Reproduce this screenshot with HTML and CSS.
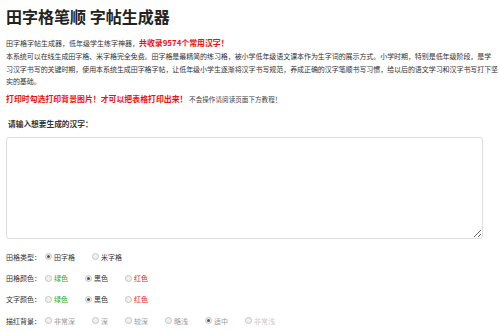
FILE: index.html
```html
<!DOCTYPE html>
<html lang="zh-CN">
<head>
    <meta charset="UTF-8">
    <meta name="viewport" content="width=device-width, initial-scale=1.0">
    <title>田字格笔顺 字帖生成器</title>
    <link rel="stylesheet" href="styles.css">
</head>
<body>
  <!-- 标题 -->
  <h1 class="titulo">田字格笔顺 字帖生成器</h1>

  <div class="intro">
    <p>田字格字帖生成器，低年级学生练字神器，<span class="rojo">共收录9574个常用汉字！</span></p>
    <p class="bloque">本系统可以在线生成田字格、米字格完全免费。田字格是最精简的练习格，被小学低年级语文课本作为生字词的展示方式。小学时期，特别是低年级阶段，是学<br>习汉字书写的关键时期，使用本系统生成田字格字帖，让低年级小学生逐渐将汉字书写规范，养成正确的汉字笔顺书写习惯，给以后的语文学习和汉字书写打下坚<br>实的基础。</p>
    <p class="aviso"><span class="rojo">打印时勾选打印背景图片！才可以把表格打印出来！</span> <small>不会操作请阅读页面下方教程！</small></p>
  </div>

  <div class="entrada">
    <label for="hanzi">请输入想要生成的汉字：</label>
    <textarea id="hanzi"></textarea>
  </div>

  <form class="opciones">
    <div class="fila">
      <span class="nombre">田格类型：</span>
      <label><input type="radio" name="tipo" checked>田字格</label>
      <label><input type="radio" name="tipo">米字格</label>
    </div>
    <div class="fila">
      <span class="nombre">田格颜色：</span>
      <label class="verde"><input type="radio" name="color">绿色</label>
      <label><input type="radio" name="color" checked>黑色</label>
      <label class="rojo-txt"><input type="radio" name="color">红色</label>
    </div>
    <div class="fila">
      <span class="nombre">文字颜色：</span>
      <label class="verde"><input type="radio" name="texto">绿色</label>
      <label><input type="radio" name="texto" checked>黑色</label>
      <label class="rojo-txt"><input type="radio" name="texto">红色</label>
    </div>
    <div class="fila gris">
      <span class="nombre">描红背景：</span>
      <label><input type="radio" name="fondo">非常深</label>
      <label><input type="radio" name="fondo">深</label>
      <label><input type="radio" name="fondo">较深</label>
      <label><input type="radio" name="fondo">略浅</label>
      <label><input type="radio" name="fondo" checked>适中</label>
      <label class="claro"><input type="radio" name="fondo">非常浅</label>
    </div>
  </form>
</body>
</html>
```

FILE: styles.css
```css
body {
  font-family: 'Noto Sans CJK SC', 'Noto Sans', sans-serif;
  background-color: #ffffff;
  color: #333333;
  margin: 0;
  padding: 6px 0 0 6px;
  overflow: hidden;
}

/* Titulo */
.titulo {
  font-size: 16px;
  font-weight: bold;
  color: #222222;
  margin: 0;
  line-height: 20px;
}

.intro {
  width: 494px;
  margin-top: 11px;
  font-size: 7px;
  line-height: 12.8px;
}

.intro p {
  margin: 0;
}

.intro .bloque {
  white-space: nowrap;
  letter-spacing: -0.07px;
}

.rojo {
  color: #f01010;
  font-weight: bold;
  font-size: 7.9px;
}

.aviso {
  margin-top: 5px !important;
}

.aviso small {
  font-size: 6.6px;
  color: #444444;
}

/* Entrada de texto */
.entrada {
  margin-top: 12px;
}

.entrada label {
  display: block;
  font-size: 7.7px;
  font-weight: bold;
  color: #333333;
  padding-left: 2px;
  line-height: 12px;
}

.entrada textarea {
  display: block;
  box-sizing: border-box;
  width: 477px;
  height: 102px;
  margin-top: 7px;
  border: 1px solid #dddddd;
  border-radius: 3px;
  resize: vertical;
}

/* Opciones */
.opciones {
  margin-top: 7px;
  font-size: 7px;
}

.fila {
  display: flex;
  align-items: center;
  height: 21.4px;
}

.nombre {
  width: 39px;
}

.fila label {
  display: flex;
  align-items: center;
  margin-right: 17px;
}

.fila input {
  appearance: none;
  -webkit-appearance: none;
  width: 7px;
  height: 7px;
  margin: 0 2px 0 0;
  border: 1px solid #c4c4c4;
  border-radius: 50%;
  background: #f1f1f1;
  position: relative;
}

.fila input:checked::after {
  content: '';
  position: absolute;
  top: 1px;
  left: 1px;
  width: 3px;
  height: 3px;
  border-radius: 50%;
  background: #555555;
}

.verde {
  color: #22aa22;
}

.rojo-txt {
  color: #e02020;
}

.gris label {
  color: #999999;
}

.gris .claro {
  color: #cccccc;
}
```
